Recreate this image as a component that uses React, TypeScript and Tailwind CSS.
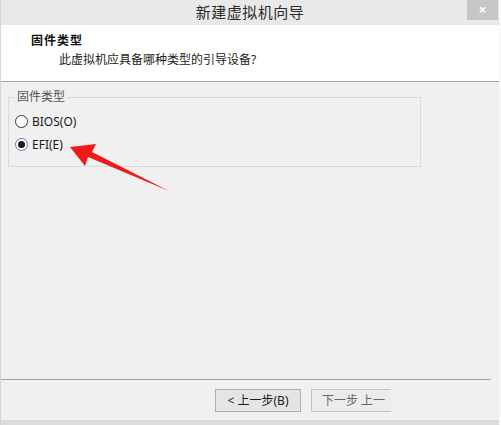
import React from "react";

const font = { fontFamily: '"Noto Sans", "Noto Sans CJK SC", sans-serif' };

function Radio({ checked, label }: { checked?: boolean; label: string }) {
  return (
    <div className="flex items-center h-[23px]">
      <span
        className={`w-[13px] h-[13px] rounded-full border bg-white flex items-center justify-center ${
          checked ? "border-[#5b7fa8]" : "border-[#333333]"
        }`}
      >
        {checked && <span className="w-[7px] h-[7px] rounded-full bg-[#1a1a1a]" />}
      </span>
      <span className="ml-[4px] text-[12px] leading-[16px] text-[#1a1a1a]">{label}</span>
    </div>
  );
}

export default function App() {
  return (
    <div
      className="w-[501px] h-[425px] relative overflow-hidden bg-[#f0f0f0] flex flex-col border-l border-[#d6d6d6] border-r-2 border-r-[#f8f8f8]"
      style={font}
    >
      {/* Title bar */}
      <div className="h-[25px] bg-[#e9e9e9] flex items-center justify-center relative shrink-0">
        <span className="text-[15px] text-[#2b2b2b] leading-none tracking-[0.5px]">新建虚拟机向导</span>
        <div className="absolute right-[1px] top-0 w-[31px] h-[20px] bg-[#c6c6c6] flex items-center justify-center">
          <span className="text-white text-[14px] leading-none font-bold">×</span>
        </div>
      </div>

      {/* Header */}
      <div className="h-[57px] bg-white border-b border-[#a3a3a3] shrink-0 pl-[30px] pt-[8px]">
        <div className="text-[12px] leading-[16px] font-bold text-[#111] tracking-[1px]">固件类型</div>
        <div className="ml-[28px] mt-[3px] text-[12px] leading-[16px] text-[#222]">此虚拟机应具备哪种类型的引导设备?</div>
      </div>

      {/* Body */}
      <div className="flex-1 flex flex-col">
        <fieldset className="ml-[7px] mt-[7px] w-[413px] h-[78px] border border-[#dadada] px-[6px]">
          <legend className="px-[2px] text-[12px] leading-[16px] text-[#555]">固件类型</legend>
          <div className="mt-[5px] flex flex-col">
            <Radio label="BIOS(O)" />
            <Radio checked label="EFI(E)" />
          </div>
        </fieldset>
        <div className="flex-1" />
        <div className="h-px bg-[#a0a0a0] mr-[8px]" />
        <div className="h-[40px] flex items-start pt-[9px] pl-[214px] gap-[10px]">
          <div className="w-[86px] h-[23px] border border-[#adadad] bg-[#e5e5e5] flex items-center justify-center text-[12px] text-[#1a1a1a]">
            &lt; 上一步(B)
          </div>
          <div className="w-[80px] h-[23px] border border-[#c4c4c4] border-r-0 bg-[#ececec] flex items-center pl-[10px] text-[12px] text-[#666]">
            下一步 上一
          </div>
        </div>
        <div className="h-[5px] bg-[#dcdcdc]" />
      </div>

      {/* Red annotation arrow */}
      <svg className="absolute left-0 top-0 pointer-events-none" width="501" height="425">
        <polygon points="69,147 95,144 91,152 168,191 87,157 84,166" fill="#f01818" />
      </svg>
    </div>
  );
}
